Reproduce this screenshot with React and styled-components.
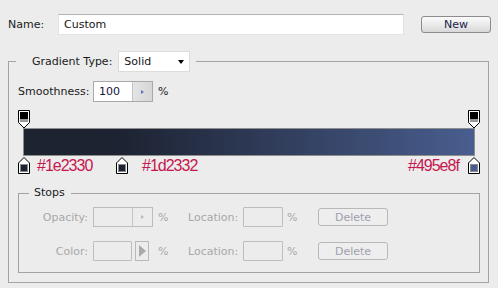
import React from 'react';
import styled, { createGlobalStyle } from 'styled-components';

const GlobalStyle = createGlobalStyle`
  html, body {
    margin: 0;
    padding: 0;
    background: #ececec;
  }
  body {
    font: normal 400 11px/13px "DejaVu Sans", Verdana, sans-serif;
    color: #1b1b1b;
  }
`;

const Page = styled.div`
  width: 498px;
  height: 288px;
  padding-top: 14px;
  box-sizing: border-box;
  overflow: hidden;
`;

const NameRow = styled.div`
  display: flex;
  align-items: center;
  padding-left: 8px;
  height: 21px;
`;

const NameLabel = styled.span`
  width: 50px;
`;

const TextInput = styled.div`
  width: 346px;
  height: 21px;
  box-sizing: border-box;
  background: #fff;
  border: 1px solid #e2e2e2;
  border-top-color: #b4b4b4;
  padding: 0 0 0 5px;
  display: flex;
  align-items: center;
  color: #141414;
`;

const Button = styled.div`
  width: ${p => p.$w || 70}px;
  height: ${p => p.$h || 17}px;
  box-sizing: border-box;
  margin-left: ${p => p.$ml || 0}px;
  display: flex;
  align-items: center;
  justify-content: center;
  border: 1px solid ${p => (p.$disabled ? '#b8b8b8' : '#8c8c8c')};
  border-radius: 3px;
  background: ${p =>
    p.$disabled ? '#eeeeee' : 'linear-gradient(#fbfbfb, #e9e9e9 55%, #d8d8d8)'};
  color: ${p => (p.$disabled ? '#a0a0ac' : '#1a1a48')};
`;

const Group = styled.fieldset`
  margin: ${p => p.$m || '0'};
  width: ${p => p.$w}px;
  box-sizing: border-box;
  min-width: 0;
  border: 1px solid #a3a3a3;
  padding: ${p => p.$pad};
`;

const Legend = styled.legend`
  margin-left: ${p => p.$ml}px;
  padding: ${p => p.$pad};
  display: flex;
  align-items: center;
  line-height: 14px;
`;

const Select = styled.div`
  width: 72px;
  height: 21px;
  box-sizing: border-box;
  margin-left: 6px;
  background: #fff;
  border: 1px solid #dcdcdc;
  display: flex;
  align-items: center;
  justify-content: space-between;
  padding: 0 5px 0 5px;
  color: #141414;
`;

const Caret = styled.span`
  width: 0;
  height: 0;
  border-left: 3.5px solid transparent;
  border-right: 3.5px solid transparent;
  border-top: 4px solid #000;
`;

const Row = styled.div`
  display: flex;
  align-items: center;
`;

const SmoothLabel = styled.span`
  width: 75px;
`;

const Spin = styled.div`
  width: 60px;
  height: ${p => p.$h || 21}px;
  box-sizing: border-box;
  display: flex;
  border: 1px solid ${p => (p.$disabled ? '#bdbdbd' : '#a9a9a9')};
  background: ${p => (p.$disabled ? '#ececec' : '#fff')};
`;

const SpinValue = styled.div`
  flex: 1;
  display: flex;
  align-items: center;
  padding-left: 5px;
  color: #14143c;
`;

const SpinButton = styled.div`
  width: 19px;
  border-left: 1px solid ${p => (p.$disabled ? '#c6c6c6' : '#c4c4c4')};
  background: ${p =>
    p.$disabled ? '#ececec' : 'linear-gradient(90deg, #e4e4e4, #d6d6d6)'};
  display: flex;
  align-items: center;
  justify-content: center;
  &::after {
    content: '';
    border-top: 2.5px solid transparent;
    border-bottom: 2.5px solid transparent;
    border-left: 3px solid ${p => (p.$disabled ? '#b8b8b8' : '#5f70b8')};
  }
`;

const Pct = styled.span`
  width: ${p => p.$w || 12}px;
  padding-left: ${p => p.$pl || 5}px;
  color: ${p => (p.$disabled ? '#a8a8a8' : '#1b1b1b')};
`;

const GradientArea = styled.div`
  margin: 8px 0 0 5px;
  width: 452px;
`;

const StopLane = styled.div`
  position: relative;
  height: ${p => p.$h}px;
  margin-top: ${p => p.$mt || 0}px;
`;

const StopMark = styled.svg`
  position: absolute;
  top: 0;
  display: block;
`;

const Bar = styled.div`
  height: 28px;
  box-sizing: border-box;
  border: 1px solid #8e8e8e;
  background: linear-gradient(90deg, #1e2330 0%, #1d2332 21.8%, #495e8f 100%);
`;

const HexLabel = styled.span`
  position: absolute;
  top: 0;
  font: normal 400 16px/17px "Liberation Sans", Arial, sans-serif;
  letter-spacing: -1px;
  color: #c5174f;
`;

const FieldGrid = styled.div`
  display: grid;
  grid-template-columns: 74px 60px 35px 55px 40px 35px 70px;
  align-items: center;
  height: 20px;
  margin-top: ${p => p.$mt || 0}px;
`;

const FieldLabel = styled.span`
  text-align: ${p => (p.$loc ? 'left' : 'right')};
  padding-right: ${p => (p.$loc ? 0 : 5)}px;
  color: #a8a8a8;
`;

const Cell = styled.div`
  display: flex;
  align-items: center;
`;

const Box = styled.div`
  width: ${p => p.$w}px;
  height: 20px;
  box-sizing: border-box;
  border: 1px solid #bebebe;
  border-radius: 1px;
`;

const ArrowButton = styled.div`
  width: 14px;
  height: 20px;
  margin-left: 3px;
  box-sizing: border-box;
  border: 1px solid #b9b9b9;
  display: flex;
  align-items: center;
  justify-content: center;
  &::after {
    content: '';
    border-top: 6px solid transparent;
    border-bottom: 6px solid transparent;
    border-left: 7px solid #a9a9a9;
  }
`;

const stops = [
  { pct: 0, color: '#1e2330', label: '#1e2330', labelX: 14 },
  { pct: 21.8, color: '#1d2332', label: '#1d2332', labelX: 119 },
  { pct: 100, color: '#495e8f', label: '#495e8f', labelX: 385 },
];

const stopLeft = pct => 1 + (pct * 450) / 100 - 6;

const TopStop = ({ pct }) => (
  <StopMark width="13" height="19" viewBox="0 0 13 19" style={{ left: stopLeft(pct) }}>
    <path d="M0.5 0.5 H11.5 V12.5 L6 18 L0.5 12.5 Z" fill="#fff" stroke="#000" />
    <rect x="2" y="2" width="8" height="7" fill="#000" />
    <rect x="2" y="9" width="8" height="3" fill="#9a9a9a" />
  </StopMark>
);

const BottomStop = ({ pct, color }) => (
  <StopMark width="13" height="17" viewBox="0 0 13 17" style={{ left: stopLeft(pct) }}>
    <path d="M6 0.5 L11.5 6 V16.5 H0.5 V6 Z" fill="#fff" stroke="#000" />
    <rect x="2.5" y="7.5" width="7" height="7" fill={color} stroke="#8a8a8a" />
  </StopMark>
);

export default function App() {
  return (
    <Page>
      <GlobalStyle />
      <NameRow>
        <NameLabel>Name:</NameLabel>
        <TextInput>Custom</TextInput>
        <Button $ml={17}>New</Button>
      </NameRow>

      <Group $m="16px 0 0 8px" $w={481} $pad="9px 9px 9px 9px">
        <Legend $ml={-2} $pad="0 6px 0 16px">
          Gradient Type:
          <Select>
            Solid
            <Caret />
          </Select>
        </Legend>

        <Row>
          <SmoothLabel>Smoothness:</SmoothLabel>
          <Spin>
            <SpinValue>100</SpinValue>
            <SpinButton />
          </Spin>
          <Pct>%</Pct>
        </Row>

        <GradientArea>
          <StopLane $h={18}>
            <TopStop pct={0} />
            <TopStop pct={100} />
          </StopLane>
          <Bar />
          <StopLane $h={17} $mt={1}>
            {stops.map(s => (
              <React.Fragment key={s.label}>
                <BottomStop pct={s.pct} color={s.color} />
                <HexLabel style={{ left: s.labelX }}>{s.label}</HexLabel>
              </React.Fragment>
            ))}
          </StopLane>
        </GradientArea>

        <Group $m="12px 0 0 0" $w={462} $pad="7px 0 11px 0">
          <Legend $ml={10} $pad="0 6px 0 5px">Stops</Legend>

          <FieldGrid>
            <FieldLabel>Opacity:</FieldLabel>
            <Cell>
              <Spin $disabled $h={20}>
                <SpinValue />
                <SpinButton $disabled />
              </Spin>
            </Cell>
            <Pct $disabled $w={35}>%</Pct>
            <FieldLabel $loc>Location:</FieldLabel>
            <Box $w={40} />
            <Pct $disabled $w={31} $pl={4}>%</Pct>
            <Button $disabled $h={18}>Delete</Button>
          </FieldGrid>

          <FieldGrid $mt={14}>
            <FieldLabel>Color:</FieldLabel>
            <Cell>
              <Box $w={39} />
              <ArrowButton />
            </Cell>
            <Pct $disabled $w={35}>%</Pct>
            <FieldLabel $loc>Location:</FieldLabel>
            <Box $w={40} />
            <Pct $disabled $w={31} $pl={4}>%</Pct>
            <Button $disabled $h={18}>Delete</Button>
          </FieldGrid>
        </Group>
      </Group>
    </Page>
  );
}
